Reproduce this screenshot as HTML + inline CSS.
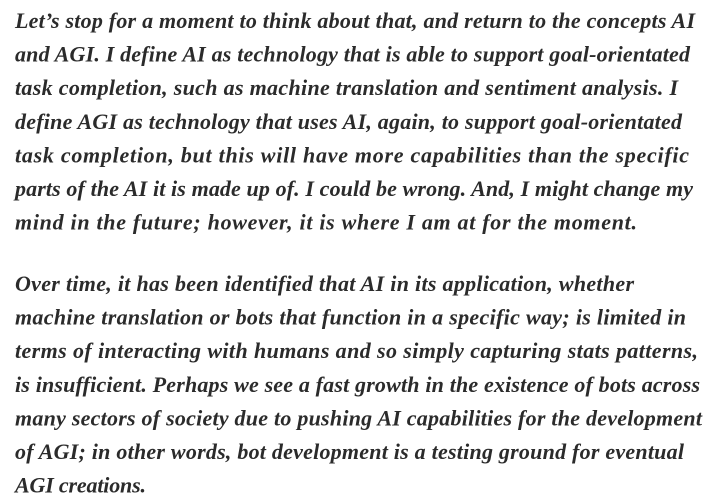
<!DOCTYPE html>
<html><head><meta charset="utf-8"><style>
html,body{margin:0;padding:0;background:#fff;width:726px;height:501px;overflow:hidden}
svg{position:absolute;left:0;top:0}
text{font-family:"Liberation Serif",serif;font-style:italic;font-weight:bold;font-size:22px;fill:#2b2b2b}
</style></head><body>
<svg width="726" height="501" xmlns="http://www.w3.org/2000/svg">
<text x="15" y="28" textLength="680" lengthAdjust="spacing">Let’s stop for a moment to think about that, and return to the concepts AI</text>
<text x="15" y="61.6" textLength="675" lengthAdjust="spacing">and AGI. I define AI as technology that is able to support goal-orientated</text>
<text x="15" y="95.2" textLength="663" lengthAdjust="spacing">task completion, such as machine translation and sentiment analysis. I</text>
<text x="15" y="128.8" textLength="667" lengthAdjust="spacing">define AGI as technology that uses AI, again, to support goal-orientated</text>
<text x="15" y="162.4" textLength="674" lengthAdjust="spacing">task completion, but this will have more capabilities than the specific</text>
<text x="15" y="196" textLength="678" lengthAdjust="spacing">parts of the AI it is made up of. I could be wrong. And, I might change my</text>
<text x="15" y="229.6" textLength="622" lengthAdjust="spacing">mind in the future; however, it is where I am at for the moment.</text>
<text x="15" y="291" textLength="619" lengthAdjust="spacing">Over time, it has been identified that AI in its application, whether</text>
<text x="15" y="324.6" textLength="671" lengthAdjust="spacing">machine translation or bots that function in a specific way; is limited in</text>
<text x="15" y="358.2" textLength="683" lengthAdjust="spacing">terms of interacting with humans and so simply capturing stats patterns,</text>
<text x="15" y="391.8" textLength="685" lengthAdjust="spacing">is insufficient. Perhaps we see a fast growth in the existence of bots across</text>
<text x="15" y="425.4" textLength="687" lengthAdjust="spacing">many sectors of society due to pushing AI capabilities for the development</text>
<text x="15" y="459" textLength="669" lengthAdjust="spacing">of AGI; in other words, bot development is a testing ground for eventual</text>
<text x="15" y="492.6" textLength="131" lengthAdjust="spacing">AGI creations.</text>
</svg>
</body></html>
